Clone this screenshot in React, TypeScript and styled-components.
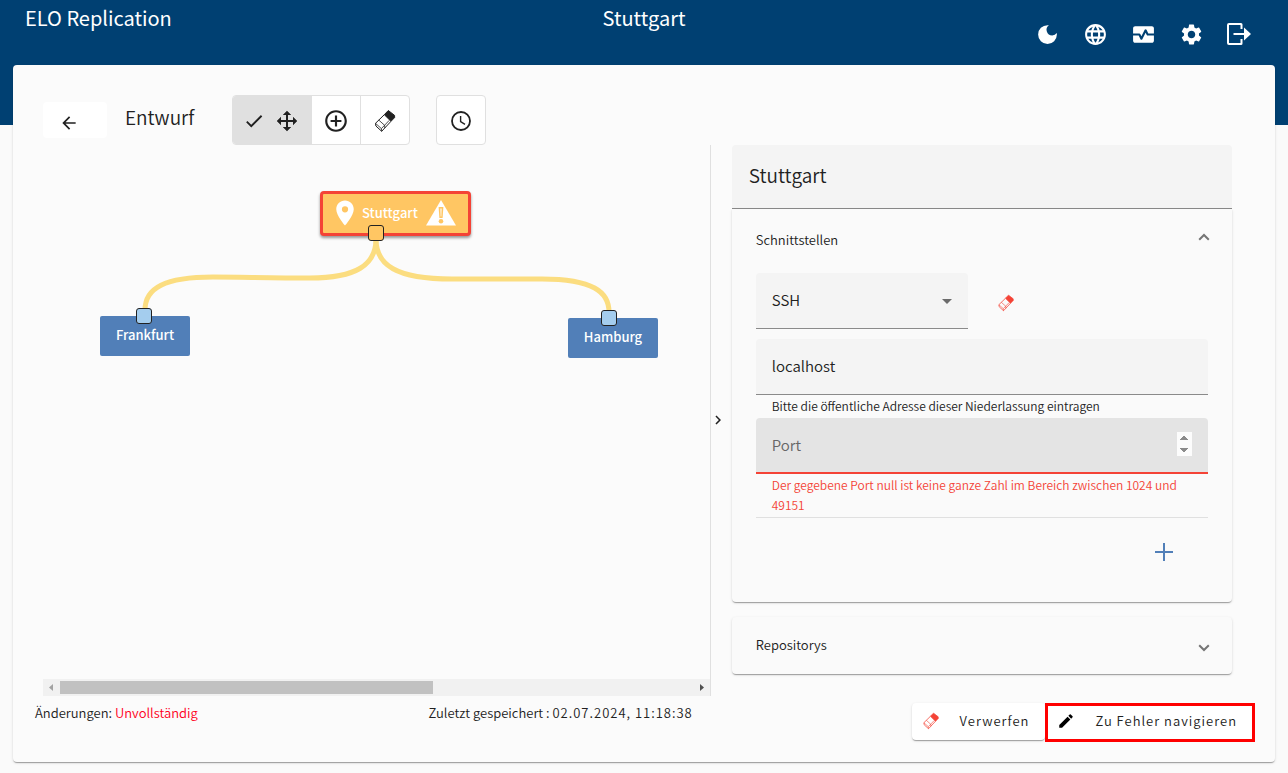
import React, { useState } from "react";
import styled, { createGlobalStyle, css } from "styled-components";
import {
  MdAddCircleOutline,
  MdArrowBack,
  MdCheck,
  MdChevronRight,
  MdDarkMode,
  MdEdit,
  MdLanguage,
  MdLocationOn,
  MdMonitorHeart,
  MdSettings,
} from "react-icons/md";

const color = {
  brand: "#004072",
  page: "#fafafa",
  surface: "#fbfbfb",
  field: "#f4f4f4",
  fieldFocus: "#e4e4e4",
  line: "#e0e0e0",
  underline: "#8a8a8a",
  text: "#212121",
  muted: "#6b6b6b",
  error: "#f44336",
  node: "#517fb8",
  root: "#ffc663",
  link: "#fbdd80",
  port: "#a4cdee",
};

const GlobalStyle = createGlobalStyle`
  *, *::before, *::after { box-sizing: border-box; }
  body {
    margin: 0;
    background: ${color.page};
    color: ${color.text};
    font-family: "Noto Sans CJK SC", "Noto Sans", sans-serif;
    font-size: 13px;
    font-weight: 350;
    line-height: 20px;
  }
  button, input, select { font: inherit; color: inherit; }
  button { cursor: pointer; }
  svg { display: block; flex: none; }
`;

const elevation = css`
  box-shadow: 0 2px 1px -1px rgba(0, 0, 0, 0.2), 0 1px 1px rgba(0, 0, 0, 0.14),
    0 1px 3px rgba(0, 0, 0, 0.12);
`;

const Header = styled.header`
  display: grid;
  grid-template-columns: 1fr auto 1fr;
  align-items: start;
  height: 125px;
  padding: 0 25px;
  background: ${color.brand};
  color: #fff;
`;

const HeaderTitle = styled.span`
  padding-top: 4px;
  font-size: 20px;
  font-weight: 400;
  line-height: 28px;
`;

const HeaderActions = styled.nav`
  display: flex;
  justify-content: flex-end;
  padding-top: 10px;
`;

const HeaderButton = styled.button`
  display: flex;
  align-items: center;
  justify-content: center;
  width: 48px;
  height: 48px;
  padding: 0;
  border: 0;
  background: none;
`;

const Card = styled.main`
  margin: -60px 13px 10px;
  border-radius: 4px;
  background: ${color.surface};
  ${elevation}
`;

const Toolbar = styled.div`
  display: flex;
  align-items: center;
  padding: 30px 30px 0;
`;

const BackButton = styled.button`
  display: flex;
  align-items: center;
  justify-content: center;
  width: 64px;
  height: 36px;
  padding: 5px 12px 0 0;
  border: 0;
  border-radius: 4px;
  background: #fff;
`;

const Title = styled.h1`
  width: 107px;
  margin: 0 0 6px 18px;
  font-size: 19px;
  font-weight: 350;
  line-height: 28px;
`;

const ToggleGroup = styled.div`
  display: flex;
  height: 50px;
  margin-right: 26px;
  border: 1px solid ${color.line};
  border-radius: 4px;
  background: #fff;
  overflow: hidden;
`;

const Toggle = styled.button<{ $active?: boolean }>`
  display: flex;
  align-items: center;
  justify-content: center;
  gap: 10px;
  width: ${(p) => (p.$active ? 78 : 48)}px;
  padding: ${(p) => (p.$active ? "2px 2px 0 0" : "2px 0 0")};
  border: 0;
  background: ${(p) => (p.$active ? color.line : "transparent")};

  & + & {
    width: 49px;
    border-left: 1px solid ${color.line};
  }
`;

const Workspace = styled.div`
  display: grid;
  grid-template-columns: minmax(0, 5fr) minmax(0, 4fr);
  padding: 0 30px;
`;

const CanvasPane = styled.section`
  display: flex;
  flex-direction: column;
  border-right: 1px solid ${color.line};
`;

const Canvas = styled.div`
  position: relative;
  flex: 1;
  overflow: hidden;
`;

const Links = styled.svg`
  position: absolute;
  top: 0;
  left: 0;
`;

const Node = styled.div<{ $x: number; $y: number; $root?: boolean }>`
  position: absolute;
  left: ${(p) => p.$x}px;
  top: ${(p) => p.$y}px;
  display: flex;
  align-items: center;
  justify-content: ${(p) => (p.$root ? "flex-start" : "center")};
  width: ${(p) => (p.$root ? 151 : 90)}px;
  height: ${(p) => (p.$root ? 45 : 40)}px;
  padding: ${(p) => (p.$root ? "0 0 2px 7px" : "0 0 2px")};
  border: ${(p) => (p.$root ? `3px solid ${color.error}` : "0")};
  border-radius: ${(p) => (p.$root ? 4 : 2)}px;
  background: ${(p) => (p.$root ? color.root : color.node)};
  color: #fff;
  font-weight: 500;
  box-shadow: ${(p) => (p.$root ? "0 2px 3px rgba(0, 0, 0, 0.4)" : "none")};
`;

const NodeLabel = styled.span`
  margin: 0 8px 0 2px;
`;

const Port = styled.span<{ $x: number; $y: number; $root?: boolean }>`
  position: absolute;
  left: ${(p) => p.$x}px;
  top: ${(p) => p.$y}px;
  width: 16px;
  height: 16px;
  border: 1px solid #222;
  border-radius: 3px;
  background: ${(p) => (p.$root ? color.root : color.port)};
`;

const ScrollTrack = styled.div`
  display: flex;
  align-items: center;
  height: 17px;
  background: #f1f1f1;
`;

const ScrollArrow = styled.svg`
  width: 17px;
  height: 17px;
`;

const ScrollRail = styled.div`
  flex: 1;
  height: 13px;
`;

const ScrollThumb = styled.div`
  width: 59%;
  height: 100%;
  background: #c1c1c1;
`;

const SidePane = styled.section`
  display: grid;
  grid-template-columns: 21px minmax(0, 1fr);
  padding-right: 13px;
`;

const SplitButton = styled.button`
  display: flex;
  align-items: center;
  justify-content: center;
  width: 14px;
  padding: 0 0 2px;
  border: 0;
  background: none;
`;

const Details = styled.div`
  display: flex;
  flex-direction: column;
  padding-bottom: 22px;
`;

const NameInput = styled.input`
  width: 100%;
  height: 64px;
  padding: 0 17px 4px;
  border: 0;
  border-bottom: 1px solid ${color.underline};
  border-radius: 4px 4px 0 0;
  background: ${color.field};
  font-size: 19px;
  outline: none;
`;

const Panel = styled.section`
  padding: 0 24px;
  border-radius: 0 0 4px 4px;
  background: #fafafa;
  ${elevation}

  & + & {
    margin-top: 15px;
    border-radius: 4px;
  }
`;

const PanelHeader = styled.button<{ $open?: boolean }>`
  display: flex;
  align-items: center;
  justify-content: space-between;
  width: 100%;
  height: ${(p) => (p.$open ? 64 : 57)}px;
  padding: 0 0 2px;
  border: 0;
  background: none;
  text-align: left;

  svg {
    margin-right: -4px;
    transform: ${(p) => (p.$open ? "none" : "rotate(180deg)")};
  }
`;

const InterfaceRow = styled.div`
  display: flex;
  align-items: center;
  gap: 20px;
  margin-bottom: 10px;
`;

const SelectBox = styled.div`
  display: grid;
  align-items: center;
  width: 212px;

  > * {
    grid-area: 1 / 1;
  }

  > svg {
    justify-self: end;
    margin-right: 16px;
    pointer-events: none;
  }
`;

const fieldStyle = css`
  display: block;
  width: 100%;
  height: 56px;
  padding: 0 16px 2px;
  border: 0;
  border-bottom: 1px solid ${color.underline};
  border-radius: 4px 4px 0 0;
  background: ${color.field};
  font-size: 15px;
  outline: none;
`;

const Select = styled.select`
  ${fieldStyle}
  appearance: none;
`;

const TextInput = styled.input<{ $invalid?: boolean }>`
  ${fieldStyle}
  ${(p) =>
    p.$invalid &&
    css`
      border-bottom: 2px solid ${color.error};
      background: ${color.fieldFocus};
    `}

  &::placeholder {
    color: #666;
    opacity: 1;
  }

  &::-webkit-inner-spin-button {
    opacity: 1;
    height: 24px;
  }
`;

const IconButton = styled.button`
  display: flex;
  align-items: center;
  justify-content: center;
  width: 36px;
  height: 36px;
  padding: 0;
  border: 0;
  background: none;
`;

const ClearButton = styled(IconButton)`
  padding-top: 4px;
`;

const Hint = styled.p<{ $error?: boolean }>`
  min-height: 23px;
  margin: 0;
  padding: 1px 16px 2px;
  color: ${(p) => (p.$error ? color.error : "inherit")};
  font-size: 12px;
  line-height: 20px;
`;

const AddRow = styled.div`
  display: flex;
  justify-content: flex-end;
  padding: 16px 26px 32px 0;
  border-top: 1px solid ${color.line};
`;

const Footer = styled.footer`
  display: grid;
  grid-template-columns: minmax(0, 5fr) minmax(0, 4fr);
  padding: 7px 20px 20px 22px;
`;

const Status = styled.div`
  display: flex;
  justify-content: space-between;
  padding-right: 20px;
`;

const StatusError = styled.span`
  color: #ff0022;
`;

const Timestamp = styled.time`
  letter-spacing: 1px;
`;

const FooterActions = styled.div`
  display: flex;
  justify-content: flex-end;
`;

const ActionButton = styled.button<{ $marked?: boolean }>`
  display: flex;
  align-items: center;
  gap: 20px;
  height: ${(p) => (p.$marked ? 39 : 37)}px;
  padding: ${(p) => (p.$marked ? "0 15px 3px 9px" : "0 16px 1px 10px")};
  border: ${(p) => (p.$marked ? "3px solid #ff0000" : "0")};
  border-radius: ${(p) => (p.$marked ? 0 : 4)}px;
  background: #fff;
  letter-spacing: 1px;
  white-space: nowrap;
  ${(p) => !p.$marked && elevation}
`;

function EraserIcon({ size = 24, tint = color.text }: { size?: number; tint?: string }) {
  return (
    <svg width={size} height={size} viewBox="0 0 24 24" fill="none" stroke={tint} strokeLinejoin="round">
      <path d="M11.3 5.7 2.5 14.3 2.9 17 8.7 22.3 18 12.3" />
      <path d="M2.5 14.3 8.4 19.6 16.2 11.4M8.4 19.6 8.7 22.3M5.8 11.1 11.6 16.3 11.8 19" strokeWidth="0.8" />
      <path d="M15.3 1.5 21.6 6.4V8.6L18 12.3 11.3 5.7Z" fill={tint} />
    </svg>
  );
}

function MoveIcon() {
  return (
    <svg width="24" height="24" viewBox="0 0 24 24" fill="currentColor">
      <path d="M13 6V11H18V7.75L22.25 12L18 16.25V13H13V18H16.25L12 22.25L7.75 18H11V13H6V16.25L1.75 12L6 7.75V11H11V6H7.75L12 1.75L16.25 6Z" />
    </svg>
  );
}

function ClockIcon() {
  return (
    <svg width="24" height="24" viewBox="0 0 24 24" fill="none" stroke="currentColor">
      <circle cx="12" cy="12" r="9" strokeWidth="1.8" />
      <path d="M11.6 7V12.6L16 15.4" strokeWidth="1.4" />
    </svg>
  );
}

function WarningIcon() {
  return (
    <svg width="30" height="26" viewBox="0 0 30 26" fill="#fff">
      <path d="M15 0 30 25.5H0Z" />
      <path d="M12.6 7H17.4L16.6 18H13.4Z" fill={color.root} />
      <path d="M14.4 8.5H15.6L15.3 16.5H14.7Z" />
      <circle cx="15" cy="21.3" r="2.3" fill={color.root} />
    </svg>
  );
}

function LogoutIcon() {
  return (
    <svg width="26" height="26" viewBox="0 0 26 26" fill="none" stroke="currentColor" strokeWidth="2">
      <path d="M15.5 8V3.5Q15.5 3 15 3H3Q2 3 2 4V22Q2 23 3 23H15Q15.5 23 15.5 22.5V18" />
      <path d="M7.5 13H19" />
      <path d="M18 6.5 25 13 18 19.5Z" fill="currentColor" stroke="none" />
    </svg>
  );
}

function ChevronIcon() {
  return (
    <svg width="16" height="16" viewBox="0 0 16 16" fill="none" stroke="#757575" strokeWidth="2">
      <path d="M3.2 7.8 8 3 12.8 7.8" />
    </svg>
  );
}

function PlusIcon() {
  return (
    <svg width="18" height="18" viewBox="0 0 18 18" stroke={color.node} strokeWidth="2">
      <path d="M9 0V18M0 9H18" />
    </svg>
  );
}

export default function App() {
  const [name, setName] = useState("Stuttgart");
  const [protocol, setProtocol] = useState("SSH");
  const [host, setHost] = useState("localhost");
  const [port, setPort] = useState("");

  return (
    <>
      <GlobalStyle />
      <Header>
        <HeaderTitle>ELO Replication</HeaderTitle>
        <HeaderTitle>Stuttgart</HeaderTitle>
        <HeaderActions>
          <HeaderButton aria-label="Dunkelmodus"><MdDarkMode size={25} /></HeaderButton>
          <HeaderButton aria-label="Sprache"><MdLanguage size={25} /></HeaderButton>
          <HeaderButton aria-label="Überwachung"><MdMonitorHeart size={25} /></HeaderButton>
          <HeaderButton aria-label="Einstellungen"><MdSettings size={25} /></HeaderButton>
          <HeaderButton aria-label="Abmelden"><LogoutIcon /></HeaderButton>
        </HeaderActions>
      </Header>

      <Card>
        <Toolbar>
          <BackButton aria-label="Zurück"><MdArrowBack size={20} /></BackButton>
          <Title>Entwurf</Title>
          <ToggleGroup>
            <Toggle $active aria-label="Verschieben" aria-pressed>
              <MdCheck size={22} />
              <MoveIcon />
            </Toggle>
            <Toggle aria-label="Hinzufügen"><MdAddCircleOutline size={26} /></Toggle>
            <Toggle aria-label="Löschen"><EraserIcon /></Toggle>
          </ToggleGroup>
          <ToggleGroup>
            <Toggle aria-label="Verlauf"><ClockIcon /></Toggle>
          </ToggleGroup>
        </Toolbar>

        <Workspace>
          <CanvasPane>
            <Canvas>
              <Links width="640" height="220" fill="none" stroke={color.link} strokeWidth="5">
                <path d="M333 94C333 120 313 133 267 133C227 133 197 132 170 132C122 132 102 143 102 165" />
                <path d="M333 94C333 120 353 134 409 134H499C550 134 566 147 566 167" />
              </Links>
              <Node $root $x={277} $y={46}>
                <MdLocationOn size={30} />
                <NodeLabel>Stuttgart</NodeLabel>
                <WarningIcon />
              </Node>
              <Node $x={57} $y={171}>Frankfurt</Node>
              <Node $x={525} $y={173}>Hamburg</Node>
              <Port $root $x={325} $y={80} />
              <Port $x={93} $y={163} />
              <Port $x={558} $y={165} />
            </Canvas>
            <ScrollTrack>
              <ScrollArrow viewBox="0 0 17 17" fill="#a3a3a3"><path d="M10 5V12L6 8.5Z" /></ScrollArrow>
              <ScrollRail><ScrollThumb /></ScrollRail>
              <ScrollArrow viewBox="0 0 17 17" fill="#505050"><path d="M7 5V12L11 8.5Z" /></ScrollArrow>
            </ScrollTrack>
          </CanvasPane>

          <SidePane>
            <SplitButton aria-label="Bereich einklappen"><MdChevronRight size={18} /></SplitButton>
            <Details>
              <NameInput aria-label="Name" value={name} onChange={(e) => setName(e.target.value)} />
              <Panel>
                <PanelHeader $open aria-expanded>
                  Schnittstellen
                  <ChevronIcon />
                </PanelHeader>
                <InterfaceRow>
                  <SelectBox>
                    <Select aria-label="Protokoll" value={protocol} onChange={(e) => setProtocol(e.target.value)}>
                      <option>SSH</option>
                      <option>HTTPS</option>
                    </Select>
                    <svg width="10" height="5" viewBox="0 0 10 5" fill={color.muted}><path d="M0 0H10L5 5Z" /></svg>
                  </SelectBox>
                  <ClearButton aria-label="Schnittstelle löschen"><EraserIcon size={18} tint={color.error} /></ClearButton>
                </InterfaceRow>
                <TextInput aria-label="Adresse" value={host} onChange={(e) => setHost(e.target.value)} />
                <Hint>Bitte die öffentliche Adresse dieser Niederlassung eintragen</Hint>
                <TextInput
                  $invalid
                  type="number"
                  aria-label="Port"
                  aria-invalid
                  placeholder="Port"
                  value={port}
                  onChange={(e) => setPort(e.target.value)}
                />
                <Hint $error>
                  Der gegebene Port null ist keine ganze Zahl im Bereich zwischen 1024 und 49151
                </Hint>
                <AddRow>
                  <IconButton aria-label="Schnittstelle hinzufügen"><PlusIcon /></IconButton>
                </AddRow>
              </Panel>
              <Panel>
                <PanelHeader aria-expanded={false}>
                  Repositorys
                  <ChevronIcon />
                </PanelHeader>
              </Panel>
            </Details>
          </SidePane>
        </Workspace>

        <Footer>
          <Status>
            <span>Änderungen: <StatusError>Unvollständig</StatusError></span>
            <span>Zuletzt gespeichert : <Timestamp>02.07.2024, 11:18:38</Timestamp></span>
          </Status>
          <FooterActions>
            <ActionButton><EraserIcon size={18} tint={color.error} />Verwerfen</ActionButton>
            <ActionButton $marked><MdEdit size={18} color="#000" />Zu Fehler navigieren</ActionButton>
          </FooterActions>
        </Footer>
      </Card>
    </>
  );
}
